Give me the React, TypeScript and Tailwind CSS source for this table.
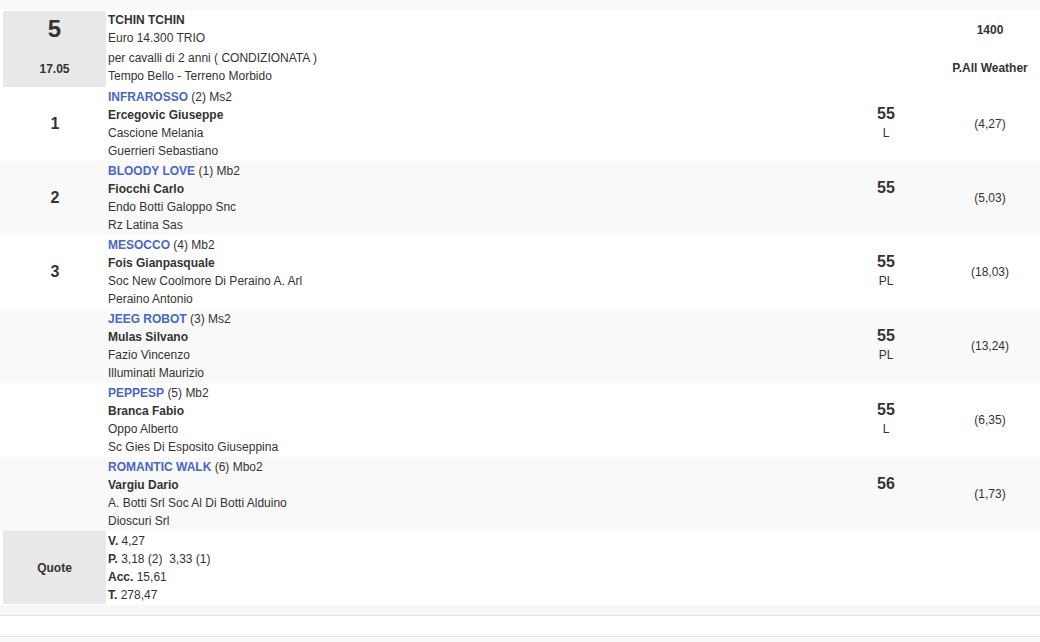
import React from 'react';

interface Runner {
  pos: string;
  horse: string;
  meta: string;
  jockey: string;
  owner: string;
  trainer: string;
  weight: string;
  tag: string;
  odds: string;
}

const runners: Runner[] = [
  { pos: '1', horse: 'INFRAROSSO', meta: '(2) Ms2', jockey: 'Ercegovic Giuseppe', owner: 'Cascione Melania', trainer: 'Guerrieri Sebastiano', weight: '55', tag: 'L', odds: '(4,27)' },
  { pos: '2', horse: 'BLOODY LOVE', meta: '(1) Mb2', jockey: 'Fiocchi Carlo', owner: 'Endo Botti Galoppo Snc', trainer: 'Rz Latina Sas', weight: '55', tag: '', odds: '(5,03)' },
  { pos: '3', horse: 'MESOCCO', meta: '(4) Mb2', jockey: 'Fois Gianpasquale', owner: 'Soc New Coolmore Di Peraino A. Arl', trainer: 'Peraino Antonio', weight: '55', tag: 'PL', odds: '(18,03)' },
  { pos: '', horse: 'JEEG ROBOT', meta: '(3) Ms2', jockey: 'Mulas Silvano', owner: 'Fazio Vincenzo', trainer: 'Illuminati Maurizio', weight: '55', tag: 'PL', odds: '(13,24)' },
  { pos: '', horse: 'PEPPESP', meta: '(5) Mb2', jockey: 'Branca Fabio', owner: 'Oppo Alberto', trainer: 'Sc Gies Di Esposito Giuseppina', weight: '55', tag: 'L', odds: '(6,35)' },
  { pos: '', horse: 'ROMANTIC WALK', meta: '(6) Mbo2', jockey: 'Vargiu Dario', owner: 'A. Botti Srl Soc Al Di Botti Alduino', trainer: 'Dioscuri Srl', weight: '56', tag: '', odds: '(1,73)' },
];

const RunnerRow: React.FC<{ r: Runner; striped: boolean }> = ({ r, striped }) => (
  <div className={`flex h-[74px] items-stretch ${striped ? 'bg-[#f9f9f9]' : 'bg-white'}`}>
    <div className="w-[108px] shrink-0 flex items-center justify-center text-[16px] font-bold pl-[2px]">{r.pos}</div>
    <div className="flex-1 pt-px leading-[18px]">
      <div>
        <span className="font-bold text-[#4767c9]">{r.horse}</span> {r.meta}
      </div>
      <div className="font-bold">{r.jockey}</div>
      <div>{r.owner}</div>
      <div>{r.trainer}</div>
    </div>
    <div className="w-[76px] shrink-0 flex flex-col items-center justify-center">
      <div className="text-[16px] font-bold leading-[18px]">{r.weight}</div>
      <div className="leading-[20px] h-[20px]">{r.tag}</div>
    </div>
    <div className="w-[16px] shrink-0" />
    <div className="w-[100px] shrink-0 flex items-center justify-center">{r.odds}</div>
  </div>
);

export default function App() {
  return (
    <div className="min-h-[642px] bg-[#f9f9f9] pt-[10px] text-[12px] text-[#333] font-['Liberation_Sans',Arial,sans-serif]">
      <div className="bg-white">
        {/* race header */}
        <div className="flex h-[77px] pt-px">
          <div className="w-[108px] shrink-0 pl-[3px] pr-[2px]">
            <div className="h-[76px] bg-[#e8e8e8] flex flex-col items-center font-bold">
              <div className="text-[24px] leading-[28px] pt-[4px]">5</div>
              <div className="mt-[17px] leading-[18px]">17.05</div>
            </div>
          </div>
          <div className="flex-1 leading-[18px]">
            <div className="font-bold">TCHIN TCHIN</div>
            <div>Euro 14.300 TRIO</div>
            <div className="mt-[2px]">per cavalli di 2 anni ( CONDIZIONATA )</div>
            <div>Tempo Bello - Terreno Morbido</div>
          </div>
          <div className="w-[192px] shrink-0 pl-[92px] flex flex-col items-center font-bold">
            <div className="mt-[10px] leading-[18px] w-[100px] text-center">1400</div>
            <div className="mt-[20px] leading-[18px] w-[100px] text-center">P.All Weather</div>
          </div>
        </div>

        {runners.map((r, i) => (
          <RunnerRow key={r.horse} r={r} striped={i % 2 === 1} />
        ))}

        {/* quote */}
        <div className="flex h-[74px]">
          <div className="w-[108px] shrink-0 pl-[3px] pr-[2px]">
            <div className="h-[73px] bg-[#e8e8e8] flex items-center justify-center font-bold">Quote</div>
          </div>
          <div className="flex-1 pt-px leading-[18px]">
            <div><b>V.</b> 4,27</div>
            <div><b>P.</b> 3,18 (2)&nbsp;&nbsp;3,33 (1)</div>
            <div><b>Acc.</b> 15,61</div>
            <div><b>T.</b> 278,47</div>
          </div>
        </div>
      </div>
      <div className="h-[11px] bg-[#f7f7f7] border-b border-[#e3e3e3]" />
      <div className="h-[21px] bg-white border-b border-[#e3e3e3]" />
    </div>
  );
}
